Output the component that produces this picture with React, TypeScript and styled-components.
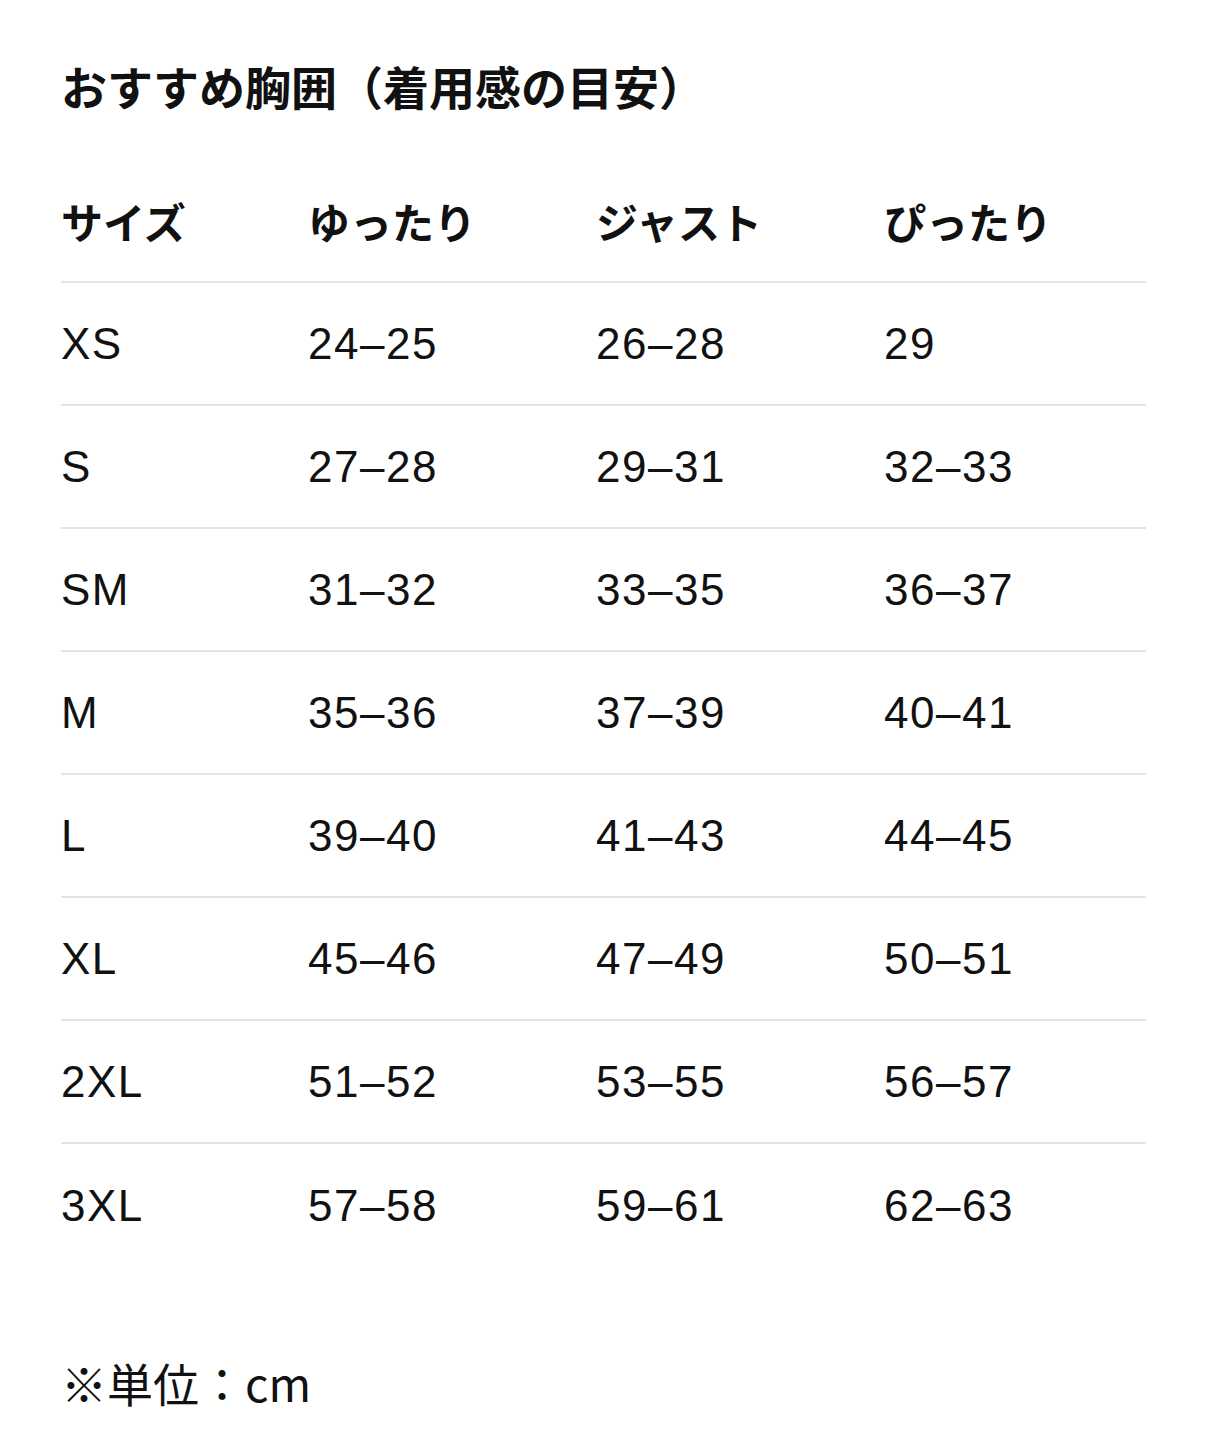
import React from "react";
import styled, { createGlobalStyle } from "styled-components";

const GlobalStyle = createGlobalStyle`
  html, body {
    margin: 0;
    padding: 0;
    background: #ffffff;
  }
  body {
    font-family: "Liberation Sans", "Noto Sans CJK JP", sans-serif;
    color: #111111;
  }
`;

const Page = styled.div`
  width: 1206px;
  padding: 0 61px;
  box-sizing: border-box;
`;

const Title = styled.h1`
  margin: 0;
  padding-top: 55px;
  height: 160px;
  box-sizing: border-box;
  font-size: 46px;
  line-height: 60px;
  font-weight: 700;
  font-family: "Noto Sans CJK JP", sans-serif;
`;

const Table = styled.div`
  width: 1085px;
`;

const Row = styled.div<{ $last?: boolean }>`
  display: grid;
  grid-template-columns: 247px 288px 288px 1fr;
  align-items: center;
  height: 123px;
  box-sizing: border-box;
  border-bottom: ${(p) => (p.$last ? "none" : "2px solid #e4e4e4")};
`;

const HeadCell = styled.div`
  font-family: "Noto Sans CJK JP", sans-serif;
  font-weight: 700;
  font-size: 42px;
  line-height: 1;
`;

const Cell = styled.div`
  font-size: 44px;
  line-height: 1;
  letter-spacing: 1.5px;
`;

const Note = styled.p`
  margin: 85px 0 0;
  font-size: 46px;
  line-height: 60px;
  font-family: "Noto Sans CJK JP", sans-serif;
`;

const rows: [string, string, string, string][] = [
  ["XS", "24–25", "26–28", "29"],
  ["S", "27–28", "29–31", "32–33"],
  ["SM", "31–32", "33–35", "36–37"],
  ["M", "35–36", "37–39", "40–41"],
  ["L", "39–40", "41–43", "44–45"],
  ["XL", "45–46", "47–49", "50–51"],
  ["2XL", "51–52", "53–55", "56–57"],
  ["3XL", "57–58", "59–61", "62–63"],
];

export default function App() {
  return (
    <Page>
      <GlobalStyle />
      <Title>おすすめ胸囲（着用感の目安）</Title>
      <Table>
        <Row>
          <HeadCell>サイズ</HeadCell>
          <HeadCell>ゆったり</HeadCell>
          <HeadCell>ジャスト</HeadCell>
          <HeadCell>ぴったり</HeadCell>
        </Row>
        {rows.map((r, i) => (
          <Row key={r[0]} $last={i === rows.length - 1}>
            {r.map((c, j) => (
              <Cell key={j}>{c}</Cell>
            ))}
          </Row>
        ))}
      </Table>
      <Note>※単位：cm</Note>
    </Page>
  );
}
